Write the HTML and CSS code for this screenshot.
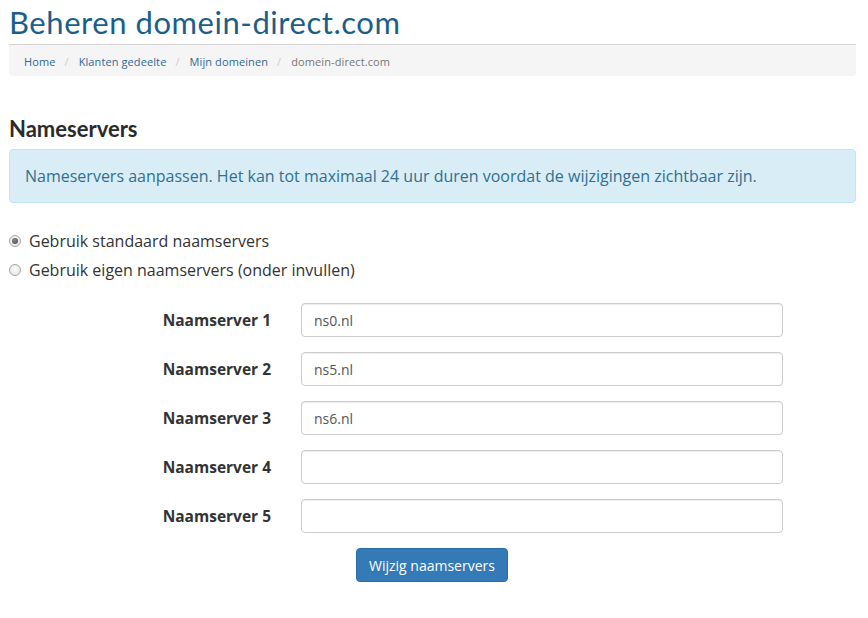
FILE: index.html
```html
<!DOCTYPE html>
<html lang="nl">
<head>
<meta charset="utf-8">
<title>Beheren domein-direct.com</title>
<link rel="stylesheet" href="styles.css">
</head>
<body>
<div class="page">
  <h1 class="title">Beheren domein-direct.com</h1>
  <ol class="breadcrumb">
    <li><a href="#">Home</a></li>
    <li><a href="#">Klanten gedeelte</a></li>
    <li><a href="#">Mijn domeinen</a></li>
    <li class="active">domein-direct.com</li>
  </ol>

  <h2 class="section-title">Nameservers</h2>
  <div class="alert">Nameservers aanpassen. Het kan tot maximaal 24 uur duren voordat de wijzigingen zichtbaar zijn.</div>

  <div class="radios">
    <label class="radio"><input type="radio" name="ns" checked> Gebruik standaard naamservers</label>
    <label class="radio"><input type="radio" name="ns"> Gebruik eigen naamservers (onder invullen)</label>
  </div>

  <form class="ns-form">
    <label class="ns-label" for="ns1">Naamserver 1</label>
    <input class="ns-input" id="ns1" type="text" value="ns0.nl">
    <label class="ns-label" for="ns2">Naamserver 2</label>
    <input class="ns-input" id="ns2" type="text" value="ns5.nl">
    <label class="ns-label" for="ns3">Naamserver 3</label>
    <input class="ns-input" id="ns3" type="text" value="ns6.nl">
    <label class="ns-label" for="ns4">Naamserver 4</label>
    <input class="ns-input" id="ns4" type="text" value="">
    <label class="ns-label" for="ns5">Naamserver 5</label>
    <input class="ns-input" id="ns5" type="text" value="">
    <div class="actions"><button type="button" class="btn">Wijzig naamservers</button></div>
  </form>
</div>
</body>
</html>
```

FILE: styles.css
```css
* { box-sizing: border-box; }
html, body { margin: 0; padding: 0; background: #fff; }
body {
  font-family: "Open Sans", "Liberation Sans", sans-serif;
  font-size: 16px;
  color: #333;
}
.page {
  padding: 0 12px 0 9px;
}
.title {
  margin: 0;
  padding-top: 3px;
  height: 45px;
  font-family: "Lato", "Open Sans", sans-serif;
  font-weight: 400;
  font-size: 31px;
  letter-spacing: 0.55px;
  line-height: 38px;
  color: #1b5e8b;
  border-bottom: 1px solid #d4d4d4;
}
.breadcrumb {
  list-style: none;
  margin: 0;
  padding: 2px 15px 0;
  height: 31px;
  display: flex;
  align-items: center;
  background: #f5f5f5;
  border-radius: 0 0 4px 4px;
  font-size: 11px;
  letter-spacing: 0.1px;
}
.breadcrumb li + li::before {
  content: "/";
  color: #ccc;
  padding: 0 10px 0 9px;
}
.breadcrumb a { color: #2f6a99; text-decoration: none; }
.breadcrumb .active { color: #777; }
.section-title {
  margin: 40px 0 0;
  font-family: "Lato", "Open Sans", sans-serif;
  font-weight: 700;
  font-size: 22px;
  line-height: 26px;
  color: #2b2b2b;
}
.alert {
  margin-top: 7px;
  height: 54px;
  padding: 0 15px;
  display: flex;
  align-items: center;
  background: #d9edf7;
  border: 1px solid #bce8f1;
  border-radius: 4px;
  color: #31708f;
  font-size: 16px;
}
.radios {
  margin-top: 27px;
  display: flex;
  flex-direction: column;
  gap: 8px;
}
.radio {
  display: flex;
  align-items: center;
  height: 21px;
  color: #333;
}
.radio input {
  appearance: none;
  -webkit-appearance: none;
  margin: 0 8px 0 0;
  width: 12px;
  height: 12px;
  border-radius: 50%;
  border: 1px solid #a6a6a6;
  background: radial-gradient(circle at 50% 40%, #fafafa 0%, #e2e2e2 100%);
  position: relative;
  flex: none;
}
.radio input:checked::after {
  content: "";
  position: absolute;
  left: 2px;
  top: 2px;
  width: 6px;
  height: 6px;
  border-radius: 50%;
  background: radial-gradient(circle at 40% 40%, #888 0%, #444 100%);
}
.ns-form {
  margin-top: 23px;
  display: grid;
  grid-template-columns: 262px 482px;
  column-gap: 30px;
  row-gap: 15px;
  align-items: center;
}
.ns-label {
  text-align: right;
  font-weight: 700;
  font-size: 15.5px;
  color: #333;
}
.ns-input {
  height: 34px;
  padding: 0 12px;
  border: 1px solid #ccc;
  border-radius: 4px;
  font-family: "Open Sans", "Liberation Sans", sans-serif;
  font-size: 14px;
  color: #555;
  background: #fff;
  box-shadow: inset 0 1px 1px rgba(0,0,0,.075);
}
.actions {
  grid-column: 1 / span 2;
  padding-left: 347px;
}
.btn {
  height: 34px;
  padding: 0 12px;
  background: #337ab7;
  border: 1px solid #2e6da4;
  border-radius: 4px;
  color: #fff;
  font-family: "Open Sans", "Liberation Sans", sans-serif;
  font-size: 14px;
}
```
